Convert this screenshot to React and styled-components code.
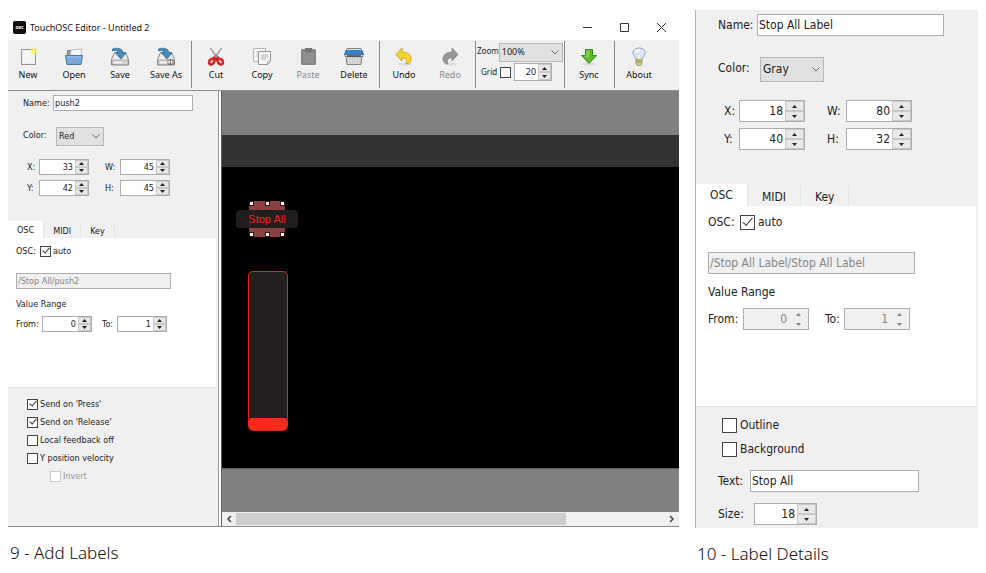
import React from 'react';
import styled, { createGlobalStyle, ThemeProvider } from 'styled-components';

const GlobalStyle = createGlobalStyle`
    body {
        margin: 0;
        background: #fff;
        color: #222;
        font-family: 'Noto Sans', 'Open Sans', sans-serif;
    }
    *, *::before {
        box-sizing: border-box;
    }
    button, input, select {
        font: inherit;
        color: inherit;
        margin: 0;
        padding: 0;
        border-radius: 0;
    }
`;

// the two inspectors share their markup and differ only in these sizes
const compact = {
    font: 9,
    field: 16,
    check: 11,
    spin: 50,
    arrows: 13,
    labelGap: 2,
    indent: 15,
    formGap: 16,
    pairGap: 5,
    pairIndent: 19,
    pairLabel: 12,
    pairLabel2: 15,
    pairSpace: 16,
    nameLabel: 30,
    name: 140,
    colorLabel: 33,
    color: 48,
    beforeTabs: 25,
    tab: 17,
    tabPad: 9,
    panel: 150,
    panelPad: 5,
    panelIndent: 8,
    pathGap: 14,
    rangeGap: 7,
    fromGap: 4,
    path: 155,
    oscLabel: 24,
    fromLabel: 26,
    toLabel: 15,
    toSpace: 10,
    optionsPad: 7,
    optionsIndent: 19,
    option: 18,
};

const roomy = {
    font: 12,
    field: 22,
    check: 15,
    spin: 66,
    arrows: 19,
    labelGap: 3,
    indent: 22,
    formGap: 21,
    pairGap: 6,
    pairIndent: 28,
    pairLabel: 15,
    pairLabel2: 19,
    pairSpace: 22,
    nameLabel: 39,
    name: 187,
    colorLabel: 42,
    color: 64,
    beforeTabs: 34,
    tab: 22,
    tabPad: 14,
    panel: 201,
    panelPad: 5,
    panelIndent: 12,
    pathGap: 19,
    rangeGap: 7,
    fromGap: 5,
    path: 207,
    oscLabel: 32,
    fromLabel: 35,
    toLabel: 19,
    toSpace: 16,
    optionsPad: 6,
    optionsIndent: 26,
    option: 24,
};

const Page = styled.main`
    display: grid;
    grid-template-columns: 671fr 283fr;
    gap: 16px;
    padding: 10px 8px 0;
`;

const Figure = styled.figure`
    margin: 0;
    min-width: 0;
`;

const Caption = styled.figcaption`
    margin-top: 14px;
    padding-left: 2px;
    font: 300 17px/24px 'Noto Sans', 'Open Sans', sans-serif;
    color: #111;
`;

const TitleBar = styled.header`
    display: flex;
    align-items: center;
    height: 30px;
    padding: 4px 12px 0 5px;
    gap: 4px;
`;

const Logo = styled.span`
    width: 13px;
    height: 13px;
    border-radius: 2px;
    background: #111;
    color: #fff;
    font-size: 5px;
    font-weight: 700;
    line-height: 12px;
    text-align: center;
`;

const Title = styled.h1`
    flex: 1;
    margin: 0;
    font-size: 9px;
    font-weight: 400;
    color: #111;
`;

const WindowButtons = styled.div`
    display: flex;
    gap: 26px;
`;

const PlainButton = styled.button`
    display: grid;
    place-items: center;
    border: 0;
    background: none;
`;

const Toolbar = styled.div`
    display: flex;
    height: 51px;
    background: #f0f0f0;
    border-bottom: 1px solid #909090;
    font-size: 9px;
`;

const ToolGroup = styled.div`
    display: flex;
    gap: 6px;
    height: 47px;
    margin-top: 1px;
    padding: 5px 5px 0 ${({ $first }) => ($first ? 0 : 4)}px;
    border-right: ${({ $last }) => ($last ? 'none' : '1px solid #8a8a8a')};
`;

const Tool = styled.button`
    display: flex;
    flex-direction: column;
    align-items: center;
    width: 40px;
    border: 0;
    background: none;
    line-height: 14px;
    white-space: nowrap;
    color: ${({ disabled }) => (disabled ? '#8c8c8c' : '#111')};
`;

const ViewGroup = styled.div`
    display: flex;
    flex-direction: column;
    gap: 4px;
    width: 89px;
    height: 47px;
    margin-top: 1px;
    padding: 2px 1px 0 1px;
    border-right: 1px solid #8a8a8a;
    line-height: 16px;

    label {
        font-size: 8px;
    }
`;

const ViewRow = styled.div`
    display: flex;
    align-items: center;
    gap: ${({ $gap = 0 }) => $gap}px;
    padding-left: ${({ $indent = 0 }) => $indent}px;
`;

const Body = styled.div`
    display: flex;
    border-bottom: 1px solid #8a8a8a;
    height: 436px;
`;

const SidePanel = styled.section`
    width: 211px;
    flex: none;
    padding-right: 2px;
    background: #f0f0f0;
    border-right: 1px solid #9a9a9a;
`;

const DetailPanel = styled.section`
    height: 518px;
    padding-right: 2px;
    background: #f0f0f0;
    border-left: 1px solid #b0b0b0;
`;

const Sizer = styled.div`
    font-family: 'DejaVu Sans Condensed', 'Noto Sans', sans-serif;
    font-size: ${({ theme }) => theme.font}px;
    line-height: ${({ theme }) => theme.field}px;
    white-space: nowrap;
`;

const Form = styled.div`
    display: flex;
    flex-direction: column;
    gap: ${({ theme }) => theme.formGap}px;
    padding: 4px 0 ${({ theme }) => theme.beforeTabs}px;
`;

const Row = styled.div`
    display: flex;
    align-items: center;
    height: ${({ theme }) => theme.field}px;
    padding-left: ${({ $indent = 0 }) => $indent}px;
    margin-top: ${({ $top = 0 }) => $top}px;
`;

const Pairs = styled.div`
    display: grid;
    gap: ${({ theme }) => theme.pairGap}px;
`;

const Label = styled.label`
    flex: none;
    width: ${({ $w }) => $w}px;
    margin-left: ${({ $space = 0 }) => $space}px;
`;

const TextInput = styled.input`
    width: ${({ $w }) => $w}px;
    height: ${({ theme }) => theme.field}px;
    padding: 0 3px 1px 1px;
    border: 1px solid #adadad;
    background: #fff;

    &:disabled {
        background: #f0f0f0;
        color: #868686;
        -webkit-text-fill-color: #868686;
    }
`;

const SelectBox = styled.span`
    display: inline-grid;
    align-items: center;
    width: ${({ $w }) => $w}px;
    height: ${({ $h }) => $h}px;

    select {
        grid-area: 1 / 1;
        appearance: none;
        width: 100%;
        height: 100%;
        padding: 0 2px 1px;
        border: 1px solid #b8b8b8;
        background: #e1e1e1;
    }
    svg {
        grid-area: 1 / 1;
        justify-self: end;
        margin-right: 4px;
        pointer-events: none;
    }
`;

const SpinBox = styled.span`
    display: inline-flex;
    width: ${({ $w }) => $w}px;
    height: ${({ $h }) => $h}px;
    border: 1px solid #adadad;
    background: ${({ $off }) => ($off ? '#f0f0f0' : '#fff')};
    color: ${({ $off }) => ($off ? '#868686' : 'inherit')};

    input {
        flex: 1;
        min-width: 0;
        padding-right: 2px;
        padding-bottom: 1px;
        border: 0;
        background: none;
        text-align: right;
    }
    input:disabled {
        -webkit-text-fill-color: #868686;
    }
`;

const Arrows = styled.span`
    display: grid;
    grid-template-rows: 1fr 1fr;
    width: ${({ $w }) => $w}px;

    button {
        border: 1px solid ${({ $off }) => ($off ? '#f0f0f0' : '#c8c8c8')};
        background: ${({ $off }) => ($off ? '#f0f0f0' : '#e8e8e8')};
        min-height: 0;
    }
`;

const Checkbox = styled.input.attrs({ type: 'checkbox' })`
    appearance: none;
    display: grid;
    place-items: center;
    flex: none;
    width: ${({ $size }) => $size}px;
    height: ${({ $size }) => $size}px;
    border: 1px solid #444;
    background: #fff;

    &:checked::before {
        content: '';
        width: 40%;
        height: 80%;
        border: solid #333;
        border-width: 0 1px 1px 0;
        transform: translateY(-15%) rotate(40deg);
    }
    &:disabled {
        border-color: #ccc;
    }
`;

const Tabs = styled.div`
    display: flex;
    align-items: flex-end;
    height: ${({ theme }) => theme.tab}px;
`;

const Tab = styled.button`
    height: ${({ theme, $active }) => theme.tab - ($active ? 0 : 2)}px;
    padding: 0 ${({ theme }) => theme.tabPad}px;
    border: 0;
    border-right: 1px solid #e4e4e4;
    background: ${({ $active }) => ($active ? '#fff' : '#f1f1f1')};
`;

const TabPanel = styled.div`
    height: ${({ theme }) => theme.panel}px;
    padding: ${({ theme }) => theme.panelPad}px 0 0 ${({ theme }) => theme.panelIndent}px;
    background: #fff;
    border-bottom: 1px solid #e2e2e2;
`;

const Options = styled.div`
    padding: ${({ theme }) => theme.optionsPad}px 0 0 ${({ theme }) => theme.optionsIndent}px;
`;

const Option = styled.label`
    display: flex;
    align-items: center;
    gap: ${({ theme }) => theme.labelGap}px;
    height: ${({ theme }) => theme.option}px;
    padding-left: ${({ $indent = 0 }) => $indent}px;
    color: ${({ $off }) => ($off ? '#999' : 'inherit')};
`;

const Workspace = styled.section`
    display: flex;
    flex-direction: column;
    flex: 1;
    min-width: 0;
    margin-left: 2px;
    background: #808080;
    border-left: 1px solid #606060;
`;

const Device = styled.div`
    margin-top: 44px;
    border-top: 32px solid #333;
    border-bottom: 1px solid #606060;
    background: #000;
    height: 334px;
    position: relative;
`;

const PushControl = styled.div`
    position: absolute;
    left: 27px;
    top: 34px;
    width: 36px;
    height: 36px;
    background: #8c4042;
    display: grid;
    grid-template-columns: repeat(3, 5px);
    justify-content: space-between;
    align-content: space-between;
`;

const Handle = styled.i`
    width: 5px;
    height: 5px;
    border: 1px solid #2a1414;
    background: #fff;
`;

const LabelControl = styled.div`
    position: absolute;
    left: 14px;
    top: 43px;
    width: 62px;
    height: 18px;
    border-radius: 4px;
    background: #211d1d;
    color: #f0281e;
    font: 11px/18px 'Liberation Sans', Arial, sans-serif;
    text-align: center;
`;

const Fader = styled.div`
    position: absolute;
    left: 26px;
    top: 104px;
    width: 40px;
    height: 160px;
    display: flex;
    align-items: flex-end;
    overflow: hidden;
    border: 1px solid #e0261e;
    border-radius: 5px;
    background: #231f1e;
`;

const FaderFill = styled.div`
    width: 100%;
    height: 12px;
    border-radius: 3px;
    background: #ff2a1c;
`;

const Scrollbar = styled.div`
    display: flex;
    align-items: center;
    height: 14px;
    margin-top: auto;
    background: #f0f0f0;
`;

const ScrollTrack = styled.div`
    flex: 1;
    height: 12px;
`;

const ScrollThumb = styled.div`
    width: 77%;
    height: 100%;
    background: #cdcdcd;
`;

const Icon = ({ children }) => (
    <svg width="22" height="22" viewBox="0 0 22 22" fill="none" aria-hidden="true">{children}</svg>
);

const NewIcon = () => (
    <Icon>
        <rect x="4.5" y="3.5" width="14" height="15" fill="#ededeb" stroke="#969696" />
        <path d="M6 5h11v12H6z" fill="#f5f5f4" />
        <circle cx="17" cy="5" r="3.5" fill="#f3ee72" opacity=".65" />
        <path d="m17 2 .8 2.2L20 5l-2.2.8L17 8l-.8-2.2L14 5l2.2-.8z" fill="#fff45a" />
    </Icon>
);

const OpenIcon = () => (
    <Icon>
        <path d="M4.500 16V4.500h5l1 1.500h7V16z" fill="#a3a6a8" stroke="#74797d" />
        <path d="m7 9 1-5 11-1-1 7z" fill="#f5f5f5" stroke="#a0a0a0" strokeWidth=".7" />
        <path d="M2.500 9.500h17l-1.500 9H4z" fill="#79a9dc" stroke="#4777aa" />
        <path d="M4 11h14" stroke="#a9caed" />
    </Icon>
);

const SaveIcon = ({ as }) => (
    <Icon>
        <path d="M5.500 6.500h11l3 7v5.500h-17v-5.500z" fill="#ededed" stroke="#858585" />
        <path d="M3 14h16v4.500H3z" fill="#d4d4d3" stroke="#8c8c8c" strokeWidth=".6" />
        <path d="M5 16.500h8" stroke="#f5f5f5" strokeWidth="1.500" />
        <path d="M3.500 3C9 1 14 3 14 7h3l-5 6-5.500-6H9C9 5 7 3.500 3.500 5z" fill="#468fbd" stroke="#2b6b9b" strokeWidth=".8" />
        {as && <path d="M13 14h5v4h-5zM15.500 13v6" fill="#fff" stroke="#555" strokeWidth=".8" />}
    </Icon>
);

const CutIcon = () => (
    <Icon>
        <path d="m5.500 2 7 12 1.500-1zM16.500 2l-7 12L8 13z" fill="#e4e4e4" stroke="#898989" strokeWidth=".9" />
        <path d="m10 11-2.500 2C5 12.500 4 15 4 17c1 3 5 1 5-1.500L11 13l2 2.500c0 2.500 4 4.500 5 1.500 0-2-1-4.500-3.500-4L12 11" stroke="#d81f1f" strokeWidth="2.500" strokeLinejoin="round" />
    </Icon>
);

const CopyIcon = () => (
    <Icon>
        <path d="M2.500 2.500h12v13h-12z" fill="#f3f3f3" stroke="#b4b4b4" />
        <path d="M5 6h7M5 8h7M5 10h7" stroke="#d0d0d0" />
        <path d="M7.500 5.500h12v10l-3 3h-9z" fill="#f7f7f7" stroke="#969696" />
        <path d="M10 9h7M10 11h7M10 13h5M16.500 18v-3h3" stroke="#b4b4b4" />
    </Icon>
);

const PasteIcon = () => (
    <Icon>
        <rect x="4" y="3" width="15" height="16" rx="1.500" fill="#858585" />
        <path d="M8 2h7v4H8z" fill="#767676" />
        <path d="M6 7h11v10H6z" fill="#8f8f8f" />
    </Icon>
);

const DeleteIcon = () => (
    <Icon>
        <path d="M4 2.500h14l2 5v3H2v-3z" fill="#dce3e9" stroke="#7d8890" />
        <path d="M3 4.500h16l1.500 4h-19z" fill="#3984cb" stroke="#2a609b" strokeWidth=".7" />
        <path d="M3 10.500h16l-1 8H4z" fill="#c8c8c8" stroke="#858585" />
        <path d="M4 10h14" stroke="#3d4952" strokeWidth="1.500" />
        <path d="M5 13h12M5 15h12M5 17h12" stroke="#f1f1f1" strokeDasharray="1.500 1" />
    </Icon>
);

const TurnIcon = ({ redo }) => (
    <Icon>
        <ellipse cx="12" cy="18" rx="7" ry="1.500" fill="#ddd" />
        <path
            d="M3 8.500 9 2v4c6 0 9 3 9 7 0 3-2 5-5 5 1.500-4 .500-6-4-6v3z"
            fill={redo ? '#969696' : '#f5d629'}
            stroke={redo ? '#888' : '#bb9b13'}
            strokeWidth=".8"
            transform={redo ? 'translate(22 0) scale(-1 1)' : undefined}
        />
    </Icon>
);

const SyncIcon = () => (
    <Icon>
        <ellipse cx="11" cy="18" rx="7" ry="1.500" fill="#ddd" />
        <path d="M7.500 3.500h7v6h4L11 17.500 3.500 9.500h4z" fill="#5dba29" stroke="#348b17" />
        <path d="M8.500 4.500h3v7h-4" fill="#80ce50" />
    </Icon>
);

const BulbIcon = () => (
    <Icon>
        <path d="M8 14c0-3-3-4-3-7.500C5 3.500 8 2 11 2s6 1.500 6 4.500c0 3.500-3 4.500-3 7.500z" fill="#dce9fb" stroke="#8f9ebc" />
        <path d="M8 6c1-2 3-2 4-2" stroke="#fff" strokeWidth="1.500" />
        <path d="M9 13 10 8h2l1 5" fill="#fbfbea" stroke="#c3c5b6" strokeWidth=".6" />
        <path d="M8 14h6v4l-1.500 1.500h-3L8 18z" fill="#d5c879" stroke="#918855" strokeWidth=".7" />
        <path d="M8 16h6" stroke="#817844" strokeWidth=".7" />
    </Icon>
);

const Chevron = () => (
    <svg width="8" height="5" viewBox="0 0 8 5" fill="none" aria-hidden="true">
        <path d="m.5.500 3.500 3.500L7.500.500" stroke="#666" />
    </svg>
);

const Triangle = ({ down }) => (
    <svg width="5" height="3" viewBox="0 0 5 3" aria-hidden="true">
        <path d={down ? 'M0 0h5L2.500 3z' : 'M0 3h5L2.500 0z'} fill="currentColor" />
    </svg>
);

const Spinner = ({ id, label, value, width, height, arrows, off }) => (
    <SpinBox $w={width} $h={height} $off={off}>
        <input id={id} aria-label={label} defaultValue={value} disabled={off} inputMode="numeric" />
        <Arrows $w={arrows} $off={off}>
            <PlainButton aria-label="Increase" disabled={off}><Triangle /></PlainButton>
            <PlainButton aria-label="Decrease" disabled={off}><Triangle down /></PlainButton>
        </Arrows>
    </SpinBox>
);

const Dropdown = ({ id, value, width, height }) => (
    <SelectBox $w={width} $h={height}>
        <select id={id} defaultValue={value}><option>{value}</option></select>
        <Chevron />
    </SelectBox>
);

const Inspector = ({ id, sizes: s, values, children }) => {
    const spin = (key, off) => (
        <Spinner id={`${id}-${key}`} value={values[key]} width={s.spin} height={s.field} arrows={s.arrows} off={off} />
    );

    return (
        <ThemeProvider theme={s}>
            <Sizer>
                <Form>
                    <Row $indent={s.indent}>
                        <Label htmlFor={`${id}-name`} $w={s.nameLabel}>Name:</Label>
                        <TextInput id={`${id}-name`} $w={s.name} defaultValue={values.name} />
                    </Row>
                    <Row $indent={s.indent}>
                        <Label htmlFor={`${id}-color`} $w={s.colorLabel}>Color:</Label>
                        <Dropdown id={`${id}-color`} value={values.color} width={s.color} height={s.field} />
                    </Row>
                    <Pairs>
                        {[['x', 'w'], ['y', 'h']].map(([a, b]) => (
                            <Row key={a} $indent={s.pairIndent}>
                                <Label htmlFor={`${id}-${a}`} $w={s.pairLabel}>{a.toUpperCase()}:</Label>
                                {spin(a)}
                                <Label htmlFor={`${id}-${b}`} $w={s.pairLabel2} $space={s.pairSpace}>{b.toUpperCase()}:</Label>
                                {spin(b)}
                            </Row>
                        ))}
                    </Pairs>
                </Form>
                <Tabs role="tablist">
                    <Tab role="tab" aria-selected="true" $active>OSC</Tab>
                    <Tab role="tab">MIDI</Tab>
                    <Tab role="tab">Key</Tab>
                </Tabs>
                <TabPanel role="tabpanel">
                    <Row>
                        <Label as="span" $w={s.oscLabel}>OSC:</Label>
                        <Option><Checkbox $size={s.check} defaultChecked />auto</Option>
                    </Row>
                    <Row $top={s.pathGap}>
                        <TextInput aria-label="OSC path" $w={s.path} defaultValue={values.path} disabled />
                    </Row>
                    <Row $top={s.rangeGap}>Value Range</Row>
                    <Row $top={s.fromGap}>
                        <Label htmlFor={`${id}-from`} $w={s.fromLabel}>From:</Label>
                        {spin('from', values.rangeOff)}
                        <Label htmlFor={`${id}-to`} $w={s.toLabel} $space={s.toSpace}>To:</Label>
                        {spin('to', values.rangeOff)}
                    </Row>
                </TabPanel>
                {children}
            </Sizer>
        </ThemeProvider>
    );
};

const pushValues = {
    name: 'push2', color: 'Red', x: 33, y: 42, w: 45, h: 45, path: '/Stop All/push2', from: 0, to: 1,
};

const labelValues = {
    name: 'Stop All Label', color: 'Gray', x: 18, y: 40, w: 80, h: 32,
    path: '/Stop All Label/Stop All Label', from: 0, to: 1, rangeOff: true,
};

const EditorToolbar = () => (
    <Toolbar role="toolbar">
        <ToolGroup $first>
            <Tool><NewIcon />New</Tool>
            <Tool><OpenIcon />Open</Tool>
            <Tool><SaveIcon />Save</Tool>
            <Tool><SaveIcon as />Save As</Tool>
        </ToolGroup>
        <ToolGroup>
            <Tool><CutIcon />Cut</Tool>
            <Tool><CopyIcon />Copy</Tool>
            <Tool disabled><PasteIcon />Paste</Tool>
            <Tool><DeleteIcon />Delete</Tool>
        </ToolGroup>
        <ToolGroup>
            <Tool><TurnIcon />Undo</Tool>
            <Tool disabled><TurnIcon redo />Redo</Tool>
        </ToolGroup>
        <ViewGroup>
            <ViewRow>
                <label htmlFor="zoom">Zoom</label>
                <Dropdown id="zoom" value="100%" width={64} height={16} />
            </ViewRow>
            <ViewRow $indent={4} $gap={3}>
                <label htmlFor="grid">Grid</label>
                <Checkbox id="grid" $size={11} />
                <Spinner id="grid-size" label="Grid size" value={20} width={38} height={18} arrows={13} />
            </ViewRow>
        </ViewGroup>
        <ToolGroup>
            <Tool><SyncIcon />Sync</Tool>
        </ToolGroup>
        <ToolGroup $last>
            <Tool><BulbIcon />About</Tool>
        </ToolGroup>
    </Toolbar>
);

const Editor = () => (
    <>
        <TitleBar>
            <Logo>osc</Logo>
            <Title>TouchOSC Editor - Untitled 2</Title>
            <WindowButtons>
                <PlainButton aria-label="Minimize">
                    <svg width="11" height="11"><path d="M1 5.500h9" stroke="#333" /></svg>
                </PlainButton>
                <PlainButton aria-label="Maximize">
                    <svg width="11" height="11"><path d="M1.500 1.500h8v8h-8z" stroke="#333" fill="none" /></svg>
                </PlainButton>
                <PlainButton aria-label="Close">
                    <svg width="11" height="11"><path d="m1 1 9 9m0-9-9 9" stroke="#333" /></svg>
                </PlainButton>
            </WindowButtons>
        </TitleBar>
        <EditorToolbar />
        <Body>
            <SidePanel>
                <Inspector id="push" sizes={compact} values={pushValues}>
                    <Options>
                        <Option><Checkbox $size={11} defaultChecked />Send on 'Press'</Option>
                        <Option><Checkbox $size={11} defaultChecked />Send on 'Release'</Option>
                        <Option><Checkbox $size={11} />Local feedback off</Option>
                        <Option><Checkbox $size={11} />Y position velocity</Option>
                        <Option $indent={23} $off><Checkbox $size={11} disabled />Invert</Option>
                    </Options>
                </Inspector>
            </SidePanel>
            <Workspace>
                <Device>
                    <PushControl>
                        {[0, 1, 2, 3, 4, 5].map((n) => <Handle key={n} />)}
                    </PushControl>
                    <LabelControl>Stop All</LabelControl>
                    <Fader><FaderFill /></Fader>
                </Device>
                <Scrollbar>
                    <PlainButton aria-label="Scroll left">
                        <svg width="14" height="12" fill="none"><path d="M9 3 6 6l3 3" stroke="#444" strokeWidth="1.500" /></svg>
                    </PlainButton>
                    <ScrollTrack><ScrollThumb /></ScrollTrack>
                    <PlainButton aria-label="Scroll right">
                        <svg width="14" height="12" fill="none"><path d="m5 3 3 3-3 3" stroke="#444" strokeWidth="1.500" /></svg>
                    </PlainButton>
                </Scrollbar>
            </Workspace>
        </Body>
    </>
);

const TextOptions = styled.div`
    display: grid;
    gap: 11px;
    padding: 9px 0 0 22px;
`;

const LabelDetails = () => (
    <DetailPanel>
        <Inspector id="label" sizes={roomy} values={labelValues}>
            <Options>
                <Option><Checkbox $size={15} />Outline</Option>
                <Option><Checkbox $size={15} />Background</Option>
            </Options>
            <TextOptions>
                <Row>
                    <Label htmlFor="label-text" $w={32}>Text:</Label>
                    <TextInput id="label-text" $w={169} defaultValue="Stop All" />
                </Row>
                <Row>
                    <Label htmlFor="label-size" $w={36}>Size:</Label>
                    <Spinner id="label-size" value={18} width={63} height={22} arrows={19} />
                </Row>
            </TextOptions>
        </Inspector>
    </DetailPanel>
);

const App = () => (
    <>
        <GlobalStyle />
        <Page>
            <Figure>
                <Editor />
                <Caption>9 - Add Labels</Caption>
            </Figure>
            <Figure>
                <LabelDetails />
                <Caption>10 - Label Details</Caption>
            </Figure>
        </Page>
    </>
);

export default App;
